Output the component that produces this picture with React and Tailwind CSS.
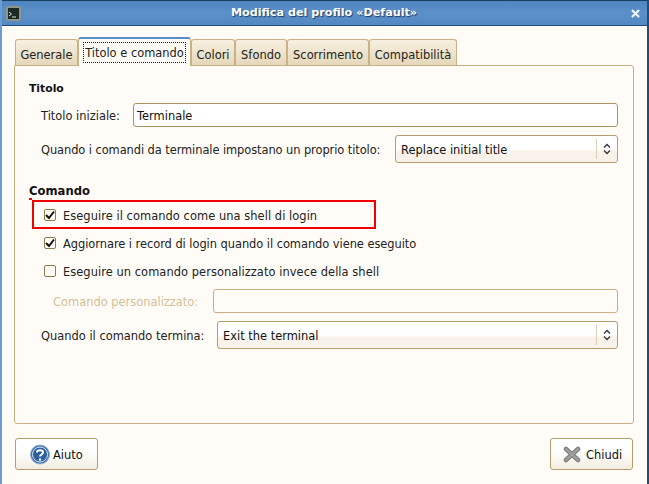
import React from "react";

const Tab = ({ children, w, active }) =>
  active ? (
    <div className={`${w} h-[29px] -mb-px z-10 relative bg-[#fffcf8] border border-[#c9b184] border-b-0 border-t-[#5b8dc4] border-t-2 rounded-t-[3px] flex items-start justify-center pt-[3px] px-[4px]`}>
      <span className="w-full h-[21px] border border-dotted border-[#222] flex items-center justify-center leading-none whitespace-nowrap pt-[3px]">{children}</span>
    </div>
  ) : (
    <div className={`${w} h-[26px] bg-gradient-to-b from-[#f7f0e1] to-[#e6d7b9] border border-[#c9b184] border-b-0 rounded-t-[3px] flex items-center justify-center pt-[7px] whitespace-nowrap`}>
      {children}
    </div>
  );

const Arrows = () => (
  <svg width="10" height="14" viewBox="0 0 10 14" fill="none" stroke="#333" strokeWidth="1.3">
    <path d="M2 5.5 L5 2.5 L8 5.5" />
    <path d="M2 8.5 L5 11.5 L8 8.5" />
  </svg>
);

const Combo = ({ children, className }) => (
  <div className={`${className} shrink-0 h-[28px] rounded-[3px] border border-[#b39c6f] bg-gradient-to-b from-white from-50% to-[#f8f2ea] to-60% flex items-center pl-[5px] text-[#111]`}>
    <span className="flex-1 pt-[4px]">{children}</span>
    <span className="h-[20px] w-[20px] border-l border-[#dccfb4] flex items-center justify-center ml-auto mr-[1px]"><Arrows /></span>
  </div>
);

const Check = ({ checked, children, className }) => (
  <div className="h-[28px] flex items-center pl-[15px] gap-[7px]">
    <span className="w-[12px] h-[12px] bg-[#fffdf9] border border-[#8f7a50] rounded-[2px] flex items-center justify-center">
      {checked && (
        <svg width="10" height="10" viewBox="0 0 10 10" fill="none" stroke="#111" strokeWidth="2">
          <path d="M1 5 L4 8 L9 1.5" />
        </svg>
      )}
    </span>
    <span className={`pt-[4px] ${className}`}>{children}</span>
  </div>
);

export default function App() {
  return (
    <div className="relative w-[649px] h-[484px] overflow-hidden bg-[#fffcf8] flex flex-col text-[11.45px] text-[#222] font-['DejaVu_Sans',sans-serif] border-l-2 border-[#6c9ad2] border-r-2 border-r-[#1d4d7c]">
      <div className="-mx-[2px] h-[26px] shrink-0 flex items-center justify-between pl-[6px] pr-[9px] bg-gradient-to-b from-[#4f86bf] via-[#5c90c9] to-[#5288c2] border-t border-[#16405f] border-b border-b-[#1d4d7c]">
        <span className="w-[15px] h-[15px] bg-[#1b2a24] border-2 border-[#8d958e] rounded-[2px] flex items-end pl-[1px] pb-[1px]">
          <svg width="8" height="6" viewBox="0 0 8 6" fill="none" stroke="#d8e8d8" strokeWidth="1"><path d="M0 0 L2.5 2 L0 4 M3 5 H7" /></svg>
        </span>
        <span className="font-bold text-[11.2px] mr-[4px] text-white [text-shadow:1px_1px_1px_#1d3f66]">Modifica del profilo «Default»</span>
        <svg width="9" height="9" viewBox="0 0 10 10" stroke="#eef4fb" strokeWidth="2.4"><path d="M1 1 L9 9 M9 1 L1 9" /></svg>
      </div>

      <div className="flex-1 flex flex-col pl-[12px] pr-[13px] pt-[10px]">
        <div className="flex items-end pl-[1px] h-[29px] relative">
          <Tab w="w-[63px]">Generale</Tab>
          <Tab w="w-[113px]" active>Titolo e comando</Tab>
          <Tab w="w-[44px]">Colori</Tab>
          <Tab w="w-[52px]">Sfondo</Tab>
          <Tab w="w-[82px]">Scorrimento</Tab>
          <Tab w="w-[88px]">Compatibilità</Tab>
        </div>
        <div className="h-[359px] border border-[#c9b184] rounded-b-[3px] rounded-tr-[3px] pl-[14px] pr-[15px] pt-[15px]">
          <div className="font-bold text-[10.8px] h-[16px] leading-[16px] text-[#111]">Titolo</div>
          <div className="pl-[12px] mt-[6px] flex items-center h-[24px]">
            <span className="w-[92px] shrink-0 pt-[4px]">Titolo iniziale:</span>
            <div className="flex-1 h-[24px] bg-white border border-[#ab9362] rounded-[3px] flex items-center pl-[3px] pt-[4px] text-[#111]">Terminale</div>
          </div>
          <div className="pl-[12px] mt-[8px] flex items-center justify-between h-[28px]">
            <span className="whitespace-nowrap pt-[4px] tracking-[-0.08px]">Quando i comandi da terminale impostano un proprio titolo:</span>
            <Combo className="w-[223px]">Replace initial title</Combo>
          </div>
          <div className="font-bold mt-[20px] h-[16px] leading-[16px] text-[11.6px] text-[#111]">Comando</div>
          <div className="mt-[2px]">
            <Check checked className="tracking-[0.05px]">Eseguire il comando come una shell di login</Check>
            <Check checked className="tracking-[-0.05px]">Aggiornare i record di login quando il comando viene eseguito</Check>
            <Check className="tracking-[0.05px]">Eseguire un comando personalizzato invece della shell</Check>
          </div>
          <div className="mt-[4px] pl-[24px] flex items-center h-[24px]">
            <span className="w-[160px] shrink-0 text-[#d3c097] pt-[4px]">Comando personalizzato:</span>
            <div className="flex-1 h-[24px] border border-[#c9b184] rounded-[3px]" />
          </div>
          <div className="mt-[8px] pl-[12px] flex items-center justify-between h-[28px]">
            <span className="whitespace-nowrap pt-[4px]">Quando il comando termina:</span>
            <Combo className="w-[401px]">Exit the terminal</Combo>
          </div>
        </div>
        <div className="flex justify-between mt-[14px] pl-[1px] pr-[1px]">
          <div className="w-[83px] h-[32px] rounded-[3px] border border-[#b39c6f] bg-gradient-to-b from-white from-40% to-[#f3ede0] flex items-center pl-[14px] gap-[3px] text-[#111]">
            <svg width="20" height="21" viewBox="0 0 20 20">
              <circle cx="10" cy="10" r="9.5" fill="#3a6ea8" stroke="#8fb0d4" strokeWidth="1" />
              <circle cx="10" cy="10" r="7.5" fill="#2c5f9c" stroke="#dbe7f3" strokeWidth="1" />
              <path d="M7 8 C7 5 13 5 13 8 C13 10 10 10 10 12" fill="none" stroke="#fff" strokeWidth="2" />
              <circle cx="10" cy="15" r="1.2" fill="#fff" />
            </svg>
            <span className="pt-[3px]">Aiuto</span>
          </div>
          <div className="w-[83px] h-[32px] rounded-[3px] border border-[#b39c6f] bg-gradient-to-b from-white from-40% to-[#f3ede0] flex items-center pl-[12px] gap-[5px] text-[#111]">
            <svg width="18" height="17" viewBox="0 0 18 17" strokeLinecap="round">
              <path d="M3 3 L15 14 M15 3 L3 14" stroke="#7f7f7f" strokeWidth="4.6" />
              <path d="M3 3 L15 14 M15 3 L3 14" stroke="#a3a3a3" strokeWidth="2" />
            </svg>
            <span className="pt-[3px]">Chiudi</span>
          </div>
        </div>
      </div>

      <div className="absolute left-[30px] top-[200px] w-[344px] h-[29px] border-[2px] border-[#f00000]" />
      <div className="absolute left-[27px] top-[198px] w-[3px] h-[2px] bg-[#f00000]" />
    </div>
  );
}
